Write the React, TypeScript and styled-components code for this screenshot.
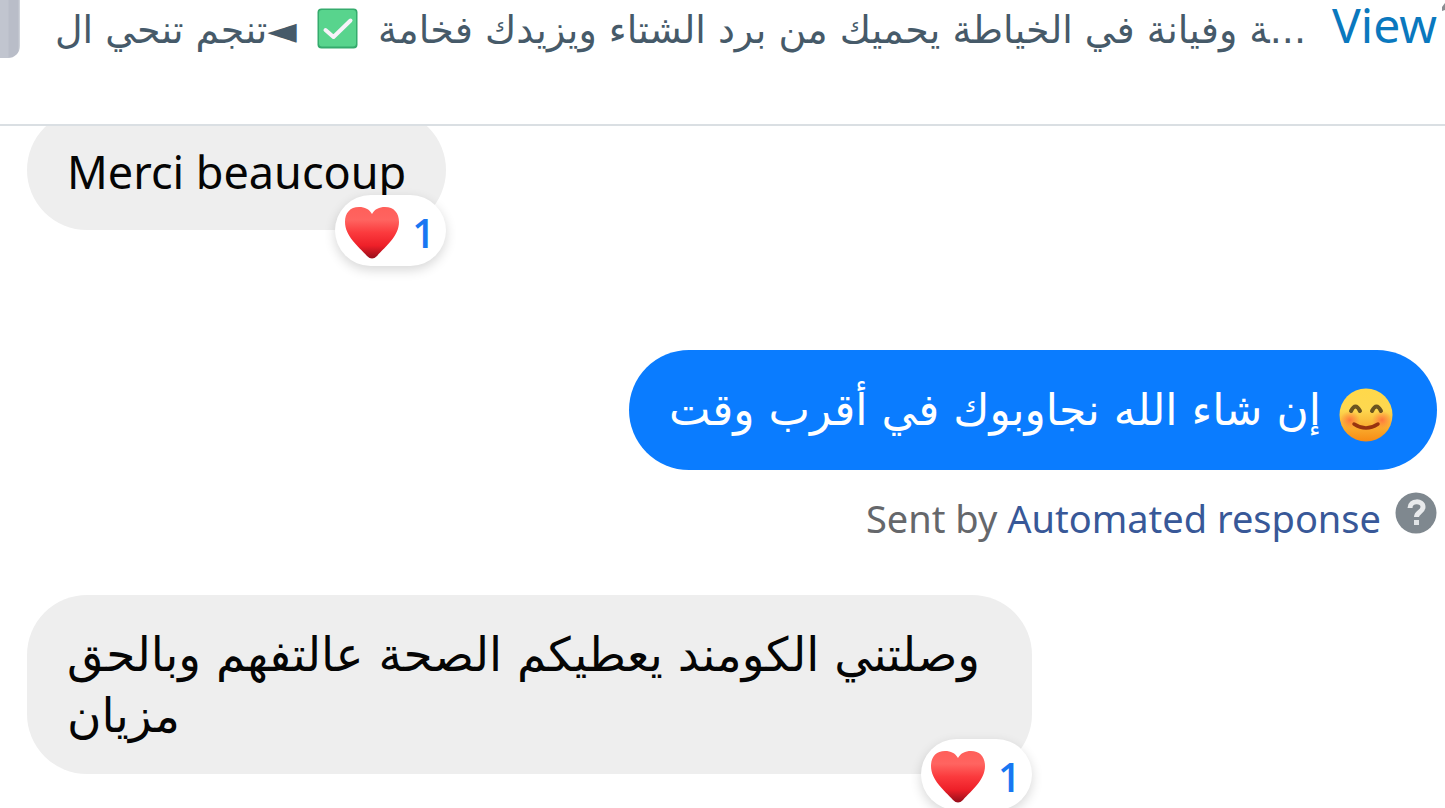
import React from "react";
import styled, { createGlobalStyle } from "styled-components";

const GlobalStyle = createGlobalStyle`
  * { box-sizing: border-box; }
  body {
    margin: 0;
    background: #fff;
    overflow: hidden;
    font-family: "Noto Sans", "Open Sans", sans-serif;
  }
`;

const Page = styled.div`
  display: flex;
  flex-direction: column;
  height: 100vh;
  overflow: hidden;
`;

const PostBar = styled.header`
  display: flex;
  align-items: flex-start;
  height: 126px;
  flex: none;
  border-bottom: 2px solid #dadfe3;
`;

const Thumbnail = styled.div`
  flex: none;
  width: 20px;
  height: 58px;
  border-bottom-right-radius: 12px;
  background: linear-gradient(90deg, #c1c5cf 0 8px, #b9bdc8 9px 18px, #d5d9df 20px);
`;

const PostText = styled.p`
  flex: 1;
  display: flex;
  align-items: flex-start;
  justify-content: space-between;
  margin: 0 26px 0 35px;
  direction: rtl;
  color: #465a69;
  font-family: "DejaVu Sans", sans-serif;
  font-size: 38px;
  line-height: 60px;
  white-space: nowrap;
`;

const CheckIcon = styled.svg`
  flex: none;
  margin-top: 8px;
`;

const ViewLink = styled.a`
  flex: none;
  color: #0a78be;
  font-size: 48px;
  line-height: 50px;
  text-decoration: none;
`;

const Chat = styled.main`
  flex: 1;
  display: flex;
  flex-direction: column;
  align-items: flex-start;
  min-height: 0;
  padding: 0 8px 0 27px;
  overflow: hidden;
`;

const Bubble = styled.div<{ $own?: boolean; $rtl?: boolean }>`
  position: relative;
  flex: none;
  align-self: ${(p) => (p.$own ? "flex-end" : "flex-start")};
  max-width: 1005px;
  padding: 29px 40px 28px;
  border-radius: 60px;
  background: ${(p) => (p.$own ? "#0a7cff" : "#eee")};
  color: ${(p) => (p.$own ? "#fff" : "#050505")};
  direction: ${(p) => (p.$rtl ? "rtl" : "ltr")};
  text-align: left;
  font-family: ${(p) => (p.$rtl ? '"DejaVu Sans"' : '"Noto Sans"')}, sans-serif;
  font-size: ${(p) => (p.$rtl ? 47 : 45)}px;
  line-height: 61px;
`;

const FirstBubble = styled(Bubble)`
  margin-top: -16px;
  margin-bottom: 120px;
  padding: 31px 40px 28px;
`;

const OwnBubble = styled(Bubble)`
  display: flex;
  align-items: center;
  gap: 18px;
  padding: 26px 44px 28px 40px;
  font-size: 44px;
`;

const SmileIcon = styled.svg`
  flex: none;
  margin-top: 12px;
`;

const Reaction = styled.button`
  position: absolute;
  right: 0;
  bottom: -36px;
  display: flex;
  align-items: center;
  gap: 13px;
  width: 111px;
  height: 71px;
  padding: 4px 10px 0;
  border: 0;
  border-radius: 36px;
  background: #fff;
  box-shadow: 0 4px 12px rgba(0, 0, 0, 0.16);
  direction: ltr;
  color: #1877f2;
  font: 600 40px/66px "Open Sans", sans-serif;
`;

const SentBy = styled.p`
  align-self: flex-end;
  display: flex;
  align-items: flex-start;
  gap: 14px;
  margin: 20px 0 49px;
  color: #65676b;
  font-size: 38px;
  line-height: 56px;
`;

const SourceLink = styled.a`
  color: #385898;
  text-decoration: none;
`;

const HelpIcon = styled.svg`
  flex: none;
  margin-top: 2px;
`;

const Heart = () => (
  <svg width="54" height="52" viewBox="0 0 54 52" aria-hidden="true">
    <defs>
      <linearGradient id="heart" x1="0" y1="0" x2="0" y2="1">
        <stop offset="0" stopColor="#ff5f5a" />
        <stop offset="0.25" stopColor="#ff6460" />
        <stop offset="0.5" stopColor="#fb3a3d" />
        <stop offset="0.75" stopColor="#ee2029" />
        <stop offset="1" stopColor="#960d1a" />
      </linearGradient>
    </defs>
    <path
      d="M27 7C24 2 20 0 14 0 5 0 0 6 0 15c0 14 13 24 22 34q5 5 10 0C41 39 54 29 54 15 54 6 49 0 40 0c-6 0-10 2-13 7Z"
      fill="url(#heart)"
    />
  </svg>
);

const Smile = () => (
  <SmileIcon width="54" height="54" viewBox="0 0 54 54" aria-hidden="true">
    <defs>
      <linearGradient id="face" x1="0" y1="0" x2="0" y2="1">
        <stop offset="0" stopColor="#ffd84a" />
        <stop offset="0.4" stopColor="#fdd850" />
        <stop offset="1" stopColor="#f78a14" />
      </linearGradient>
      <radialGradient id="blush">
        <stop offset="0" stopColor="#ff6a3d" stopOpacity="0.85" />
        <stop offset="1" stopColor="#ff7a3d" stopOpacity="0" />
      </radialGradient>
    </defs>
    <circle cx="27" cy="27" r="26.5" fill="url(#face)" />
    <ellipse cx="11" cy="32" rx="10" ry="9" fill="url(#blush)" />
    <ellipse cx="43" cy="32" rx="10" ry="9" fill="url(#blush)" />
    <path
      d="M12 23q4.500-9 9 0M33 23q4.500-9 9 0"
      fill="none"
      stroke="#6b5420"
      strokeWidth="4"
      strokeLinecap="round"
      strokeLinejoin="round"
    />
    <path d="M15 36q12 8 24 0" fill="none" stroke="#98330f" strokeWidth="3.500" strokeLinecap="round" />
  </SmileIcon>
);

const CheckMark = () => (
  <CheckIcon width="41" height="41" viewBox="0 0 41 41" role="img" aria-label="check">
    <rect x="0.500" y="0.500" width="40" height="40" rx="4" fill="#35ab6d" />
    <rect x="2" y="2" width="37" height="36.500" rx="3" fill="#58d48d" />
    <path
      d="M8.500 22 16.500 29 33.500 12.500"
      fill="none"
      stroke="#f7f2fa"
      strokeWidth="4"
      strokeLinecap="round"
      strokeLinejoin="round"
    />
  </CheckIcon>
);

const ReactionBadge = () => (
  <Reaction type="button" aria-label="1 love reaction">
    <Heart />
    <span>1</span>
  </Reaction>
);

export default function App() {
  return (
    <>
      <GlobalStyle />
      <Page>
        <PostBar>
          <Thumbnail />
          <PostText>
            <span>{"...\u200dة وفيانة في الخياطة يحميك من برد الشتاء ويزيدك فخامة"}</span>
            <CheckMark />
            <span>◄تنجم تنحي ال</span>
          </PostText>
          <ViewLink href="#post">View</ViewLink>
          <svg width="8" height="12" viewBox="0 0 8 12" aria-hidden="true">
            <path d="M8 3 5 7V11L8 10Z" fill="#8a8d91" />
          </svg>
        </PostBar>
        <Chat>
          <FirstBubble>
            Merci beaucoup
            <ReactionBadge />
          </FirstBubble>
          <OwnBubble $own $rtl>
            <Smile />
            <span>إن شاء الله نجاوبوك في أقرب وقت</span>
          </OwnBubble>
          <SentBy>
            <span>
              Sent by <SourceLink href="#automated">Automated response</SourceLink>
            </span>
            <HelpIcon width="42" height="42" viewBox="0 0 42 42" aria-hidden="true">
              <circle cx="21" cy="21" r="20.500" fill="#7f888f" />
              <path
                d="M15 16c0-8 13-8 13-1 0 5-6.500 5-6.500 10"
                fill="none"
                stroke="#e8eaec"
                strokeWidth="5"
              />
              <rect x="19" y="28" width="5" height="5" fill="#e0e3e6" />
            </HelpIcon>
          </SentBy>
          <Bubble $rtl>
            وصلتني الكومند يعطيكم الصحة عالتفهم وبالحق مزيان
            <ReactionBadge />
          </Bubble>
        </Chat>
      </Page>
    </>
  );
}
